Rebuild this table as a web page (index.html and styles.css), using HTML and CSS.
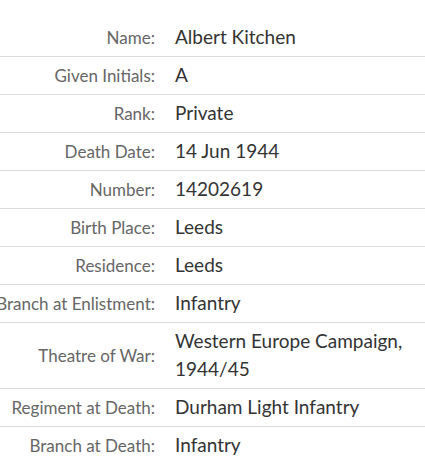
FILE: index.html
```html
<!DOCTYPE html>
<html>
<head>
<meta charset="utf-8">
<link rel="stylesheet" href="styles.css">
</head>
<body>
<div class="record">
  <div class="row"><div class="label">Name:</div><div class="value">Albert Kitchen</div></div>
  <div class="row"><div class="label">Given Initials:</div><div class="value">A</div></div>
  <div class="row"><div class="label">Rank:</div><div class="value">Private</div></div>
  <div class="row"><div class="label">Death Date:</div><div class="value">14 Jun 1944</div></div>
  <div class="row"><div class="label">Number:</div><div class="value">14202619</div></div>
  <div class="row"><div class="label">Birth Place:</div><div class="value">Leeds</div></div>
  <div class="row"><div class="label">Residence:</div><div class="value">Leeds</div></div>
  <div class="row"><div class="label">Branch at Enlistment:</div><div class="value">Infantry</div></div>
  <div class="row"><div class="label">Theatre of War:</div><div class="value">Western Europe Campaign, 1944/45</div></div>
  <div class="row"><div class="label">Regiment at Death:</div><div class="value">Durham Light Infantry</div></div>
  <div class="row"><div class="label">Branch at Death:</div><div class="value">Infantry</div></div>
</div>
</body>
</html>
```
FILE: styles.css
```css
html, body {
  margin: 0;
  padding: 0;
  background: #fff;
  overflow: hidden;
}
.record {
  margin-left: -20px;
  padding-top: 19px;
  font-family: Lato, "Liberation Sans", sans-serif;
}
.row {
  display: grid;
  grid-template-columns: 195px 1fr;
  align-items: center;
  border-bottom: 1px solid #dcdcdc;
}
.label {
  padding-right: 20px;
  text-align: right;
  white-space: nowrap;
  color: #666;
  font-size: 17px;
  line-height: 28px;
}
.value {
  padding: 4px 10px 5px 0;
  color: #333;
  font-size: 19px;
  line-height: 28px;
}
```
